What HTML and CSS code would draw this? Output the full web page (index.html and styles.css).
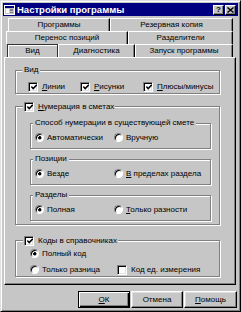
FILE: index.html
```html
<!DOCTYPE html>
<html lang="ru">

<head>
    <meta charset="UTF-8">
    <meta name="viewport" content="width=device-width, initial-scale=1.0">
    <title>Настройки программы</title>
    <link rel="stylesheet" href="styles.css">
</head>

<body>

    <div class="window">
        <div class="titlebar">
            <svg class="app-icon" width="11" height="11" viewBox="0 0 11 11">
                <rect x="0.5" y="1.5" width="10" height="9" fill="#c6c6c6" stroke="#fff" />
                <rect x="1" y="2" width="9" height="2" fill="#000080" />
                <rect x="2" y="5" width="3" height="4" fill="#fff" />
                <rect x="6" y="5" width="3" height="2" fill="#808080" />
                <rect x="6" y="8" width="3" height="1" fill="#808080" />
            </svg>
            <span class="title">Настройки программы</span>
            <div class="title-btns">
                <span class="tbtn">?</span>
                <span class="tbtn">
                    <svg width="7" height="6" viewBox="0 0 7 6">
                        <path d="M0.5 0.5 L6.5 5.5 M6.5 0.5 L0.5 5.5" stroke="#000" stroke-width="1.4" />
                    </svg>
                </span>
            </div>
        </div>

        <!-- tabs go in three staggered rows -->
        <div class="tabs">
            <div class="tab-row row1">
                <div class="tab w102">Программы</div>
                <div class="tab w123">Резервная копия</div>
            </div>
            <div class="tab-row row2">
                <div class="tab w122">Перенос позиций</div>
                <div class="tab w105">Разделители</div>
            </div>
            <div class="tab-row row3">
                <div class="tab active w51">Вид</div>
                <div class="tab w77">Диагностика</div>
                <div class="tab w98">Запуск программы</div>
            </div>
        </div>

        <div class="panel">
            <fieldset class="group group-vid">
                <legend>Вид</legend>
                <div class="opts cols-vid">
                    <label class="opt"><span class="check on"><svg width="6" height="6" viewBox="0 0 6 6"><path d="M0.3 2.6 L2.2 4.6 L5.8 0.8" fill="none" stroke="#000" stroke-width="1.5" /></svg></span><span><u>Л</u>инии</span></label>
                    <label class="opt"><span class="check on"><svg width="6" height="6" viewBox="0 0 6 6"><path d="M0.3 2.6 L2.2 4.6 L5.8 0.8" fill="none" stroke="#000" stroke-width="1.5" /></svg></span><span><u>Р</u>исунки</span></label>
                    <label class="opt"><span class="check on"><svg width="6" height="6" viewBox="0 0 6 6"><path d="M0.3 2.6 L2.2 4.6 L5.8 0.8" fill="none" stroke="#000" stroke-width="1.5" /></svg></span><span><u>П</u>люсы/минусы</span></label>
                </div>
            </fieldset>

            <fieldset class="group group-num">
                <legend>
                    <label class="opt"><span class="check on"><svg width="6" height="6" viewBox="0 0 6 6"><path d="M0.3 2.6 L2.2 4.6 L5.8 0.8" fill="none" stroke="#000" stroke-width="1.5" /></svg></span><span><u>Н</u>умерация в сметах</span></label>
                </legend>

                <fieldset class="sub">
                    <legend>Способ нумерации в существующей смете</legend>
                    <div class="opts cols-sub">
                        <label class="opt"><span class="radio on"></span><span>Автоматически</span></label>
                        <label class="opt"><span class="radio"></span><span>Вручную</span></label>
                    </div>
                </fieldset>

                <fieldset class="sub">
                    <legend>Позиции</legend>
                    <div class="opts cols-sub">
                        <label class="opt"><span class="radio on"></span><span>Везде</span></label>
                        <label class="opt"><span class="radio"></span><span><u>В</u> пределах раздела</span></label>
                    </div>
                </fieldset>

                <fieldset class="sub">
                    <legend>Разделы</legend>
                    <div class="opts cols-sub">
                        <label class="opt"><span class="radio on"></span><span>Полная</span></label>
                        <label class="opt"><span class="radio"></span><span><u>Т</u>олько разности</span></label>
                    </div>
                </fieldset>
            </fieldset>

            <fieldset class="group group-codes">
                <legend>
                    <label class="opt"><span class="check on"><svg width="6" height="6" viewBox="0 0 6 6"><path d="M0.3 2.6 L2.2 4.6 L5.8 0.8" fill="none" stroke="#000" stroke-width="1.5" /></svg></span><span>Коды в справочниках</span></label>
                </legend>
                <div class="opts cols-codes">
                    <label class="opt"><span class="radio on"></span><span>Полный код</span></label>
                    <span></span>
                    <label class="opt"><span class="radio"></span><span>Только разница</span></label>
                    <label class="opt"><span class="check"></span><span>Код ед. измерения</span></label>
                </div>
            </fieldset>
        </div>

        <div class="buttons">
            <button class="btn default"><u>О</u>К</button>
            <button class="btn">Отмена</button>
            <button class="btn wide"><u>П</u>омощь</button>
        </div>
    </div>

</body>

</html>
```

FILE: styles.css
```css
* {
    margin: 0;
    padding: 0;
    box-sizing: border-box;
}

body {
    background-color: #c6c6c6;
    color: #000;
    font-family: "Liberation Sans", Arial, sans-serif;
    font-size: 8px;
    line-height: 11px;
}

.window {
    width: 241px;
    height: 312px;
    padding: 2px;
    background-color: #c6c6c6;
    border: 1px solid;
    border-color: #dfdfdf #000 #000 #dfdfdf;
    box-shadow: inset 1px 1px #fff, inset -1px -1px #808080;
    display: flex;
    flex-direction: column;
}

/* title bar */

.titlebar {
    height: 13px;
    padding-left: 1px;
    background-color: #000080;
    color: #fff;
    display: flex;
    align-items: center;
}

.app-icon {
    flex: none;
}

.title {
    margin-left: 2px;
    font-weight: bold;
    font-size: 9.5px;
}

.title-btns {
    margin-left: auto;
    margin-right: 2px;
    display: flex;
    gap: 1px;
}

.tbtn {
    width: 11px;
    height: 10px;
    background-color: #c6c6c6;
    border: 1px solid;
    border-color: #fff #000 #000 #fff;
    box-shadow: inset -1px -1px #808080;
    color: #000;
    font-weight: bold;
    font-size: 8px;
    line-height: 8px;
    display: flex;
    align-items: center;
    justify-content: center;
}

/* tabs */

.tabs {
    margin-top: 2px;
}

.tab-row {
    display: flex;
    height: 13px;
}

.row1 {
    padding-left: 5px;
}

.row2 {
    padding-left: 3px;
}

.row3 {
    padding-left: 4px;
}

.tab {
    border-top: 1px solid #fff;
    border-left: 1px solid #fff;
    border-right: 1px solid #000;
    box-shadow: inset -1px 0 #808080;
    text-align: center;
    line-height: 12px;
    white-space: nowrap;
}

.tab.active {
    border: 1px solid #333;
    border-bottom: none;
    box-shadow: inset 1px 1px #fff;
}

.w51 { width: 51px; }
.w77 { width: 77px; }
.w98 { width: 98px; }
.w102 { width: 102px; }
.w105 { width: 105px; }
.w122 { width: 122px; }
.w123 { width: 123px; }

/* page body */

.panel {
    margin-left: 1px;
    width: 232px;
    height: 228px;
    border: 1px solid;
    border-color: #fff #000 #000 #fff;
    box-shadow: inset -1px -1px #808080;
}

fieldset {
    border: 1px solid #808080;
    box-shadow: 1px 1px #fff, inset 1px 1px #fff;
    min-width: 0;
}

legend {
    background-color: #c6c6c6;
    white-space: nowrap;
}

.group {
    margin: 7px 15px 0 10px;
}

.group-vid {
    padding: 6px 0 1px 12px;
}

.group-vid legend {
    margin-left: -6px;
    padding: 0 2px;
    line-height: 10px;
}

.group-num {
    padding: 6px 8px 3px 14px;
}

.group-codes {
    margin-top: 10px;
    padding: 2px 0 1px 14px;
}

.group-num legend,
.group-codes legend {
    margin-left: -7px;
    padding: 0 1px;
}

.sub {
    padding: 4px 0 5px 4px;
}

.sub + .sub {
    margin-top: 5px;
}

.sub legend {
    margin-left: -2px;
    padding: 0 2px;
    line-height: 10px;
}

/* options */

.opts {
    display: grid;
}

.cols-vid {
    grid-template-columns: 52px 63px auto;
}

.cols-sub {
    grid-template-columns: 79px auto;
}

.cols-codes {
    grid-template-columns: 87px auto;
    row-gap: 5px;
}

.opt {
    display: flex;
    align-items: center;
    gap: 3px;
    white-space: nowrap;
}

.opt .check + span {
    margin-left: 1px;
}

.check {
    flex: none;
    width: 10px;
    height: 10px;
    background-color: #fff;
    border: 1px solid;
    border-color: #808080 #fff #fff #808080;
    box-shadow: inset 1px 1px #000, inset -1px -1px #dfdfdf;
    display: flex;
    align-items: center;
    justify-content: center;
}

.check svg {
    margin: 1px 0 0 1px;
}

.radio {
    flex: none;
    width: 9px;
    height: 9px;
    border-radius: 50%;
    background-color: #fff;
    border: 1px solid;
    border-color: #808080 #fff #fff #808080;
    box-shadow: inset 1px 1px #000;
}

.radio.on {
    background: radial-gradient(circle at 55% 55%, #000 0 1.4px, #fff 1.9px);
}

/* dialog buttons */

.buttons {
    margin-top: 6px;
    margin-right: 1px;
    display: flex;
    justify-content: flex-end;
    gap: 1px;
}

.btn {
    width: 52px;
    height: 17px;
    font: inherit;
    color: #000;
    background-color: #c6c6c6;
    border: 1px solid;
    border-color: #fff #000 #000 #fff;
    box-shadow: inset -1px -1px #808080, inset 1px 1px #dfdfdf;
    text-align: center;
}

.btn.wide {
    width: 53px;
}

.btn.default {
    border-color: #000;
    box-shadow: inset 1px 1px #fff, inset -1px -1px #000, inset -2px -2px #808080;
}
```
